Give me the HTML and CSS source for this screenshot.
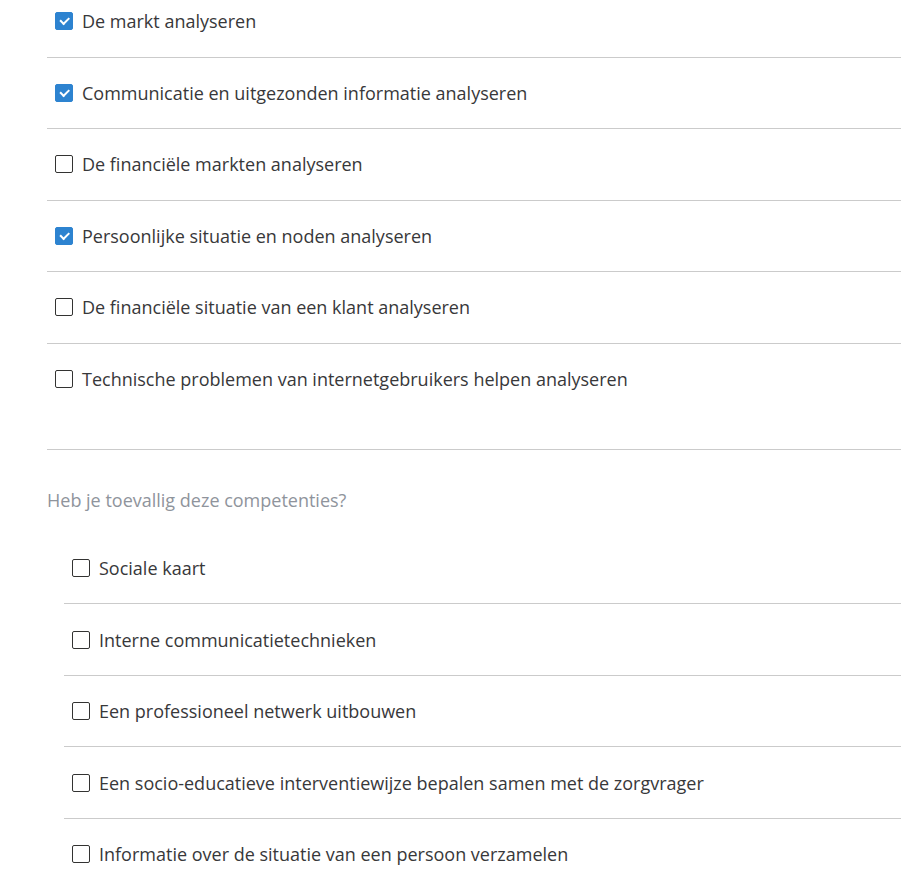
FILE: index.html
```html
<!DOCTYPE html>
<html lang="nl">
<head>
<meta charset="utf-8">
<link rel="stylesheet" href="styles.css">
</head>
<body>
<div class="page">
  <ul class="list">
    <li class="row"><label class="item"><input type="checkbox" class="cb" checked><span>De markt analyseren</span></label></li>
    <li class="row"><label class="item"><input type="checkbox" class="cb" checked><span>Communicatie en uitgezonden informatie analyseren</span></label></li>
    <li class="row"><label class="item"><input type="checkbox" class="cb"><span>De financiële markten analyseren</span></label></li>
    <li class="row"><label class="item"><input type="checkbox" class="cb" checked><span>Persoonlijke situatie en noden analyseren</span></label></li>
    <li class="row"><label class="item"><input type="checkbox" class="cb"><span>De financiële situatie van een klant analyseren</span></label></li>
    <li class="row last"><label class="item"><input type="checkbox" class="cb"><span>Technische problemen van internetgebruikers helpen analyseren</span></label></li>
  </ul>
  <section class="extra">
    <h2 class="question">Heb je toevallig deze competenties?</h2>
    <ul class="list sub">
      <li class="row"><label class="item"><input type="checkbox" class="cb"><span>Sociale kaart</span></label></li>
      <li class="row"><label class="item"><input type="checkbox" class="cb"><span>Interne communicatietechnieken</span></label></li>
      <li class="row"><label class="item"><input type="checkbox" class="cb"><span>Een professioneel netwerk uitbouwen</span></label></li>
      <li class="row"><label class="item"><input type="checkbox" class="cb"><span>Een socio-educatieve interventiewijze bepalen samen met de zorgvrager</span></label></li>
      <li class="row"><label class="item"><input type="checkbox" class="cb"><span>Informatie over de situatie van een persoon verzamelen</span></label></li>
    </ul>
  </section>
</div>
</body>
</html>
```
FILE: styles.css
```css
html, body {
  margin: 0;
  padding: 0;
  background: #fff;
}
body {
  font-family: "Open Sans", "Liberation Sans", sans-serif;
  color: #38383a;
  font-size: 18px;
}
.page {
  padding-left: 47px;
  margin-top: -14px;
}
.list {
  list-style: none;
  margin: 0;
  padding: 0;
}
.row {
  border-bottom: 1px solid #cbcbcb;
  padding: 23.25px 0;
  line-height: 24px;
}
.row.last {
  padding-bottom: 58px;
}
.item {
  display: flex;
  align-items: center;
  gap: 9px;
  padding-left: 8px;
  cursor: pointer;
}
.cb {
  appearance: none;
  -webkit-appearance: none;
  margin: 0;
  width: 18px;
  height: 18px;
  border: 1.5px solid #333332;
  border-radius: 2px;
  box-sizing: border-box;
  flex: none;
  background: #fff;
  position: relative;
}
.cb:checked {
  background: #2d83d0;
  border-color: #2d83d0;
}
.cb:checked::after {
  content: "";
  position: absolute;
  left: 3.5px;
  top: 4px;
  width: 7px;
  height: 3.5px;
  border-left: 2.5px solid #fff;
  border-bottom: 2.5px solid #fff;
  transform: rotate(-45deg);
}
.question {
  margin: 0;
  padding: 38px 0 0;
  font-size: 18px;
  font-weight: 400;
  line-height: 24px;
  color: #8f949c;
}
.sub {
  margin-left: 17px;
  margin-top: 21px;
}
.sub .row:last-child {
  border-bottom: none;
}
```
